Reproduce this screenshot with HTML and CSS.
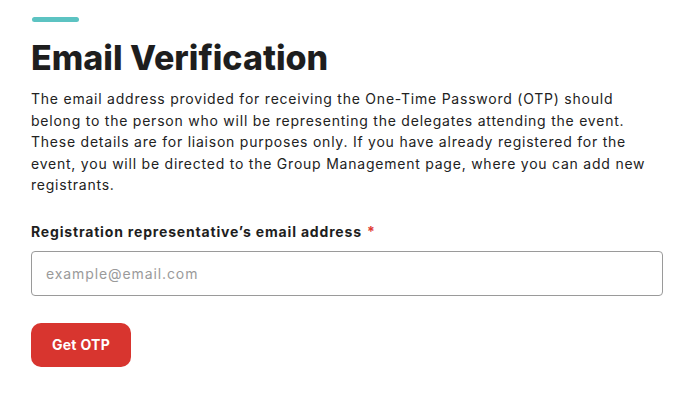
FILE: index.html
```html
<!DOCTYPE html>
<html lang="en">
<head>
<meta charset="utf-8">
<title>Email Verification</title>
<link rel="stylesheet" href="styles.css">
</head>
<body>
<main class="page">
  <div class="accent"></div>
  <h1 class="title">Email Verification</h1>
  <p class="intro">The email address provided for receiving the One-Time Password (OTP) should belong to the person who will be representing the delegates attending the event. These details are for liaison purposes only. If you have already registered for the event, you will be directed to the Group Management page, where you can add new registrants.</p>
  <form class="form">
    <label class="label" for="email">Registration representative’s email address <span class="req">*</span></label>
    <input class="input" id="email" type="email" placeholder="example@email.com">
    <button class="btn" type="button">Get OTP</button>
  </form>
</main>
</body>
</html>
```
FILE: styles.css
```css
* { box-sizing: border-box; }
html, body { margin: 0; background: #ffffff; }
body { font-family: "Inter", "Liberation Sans", sans-serif; color: #1e1e1e; }
.page { padding: 17px 35px 0 31px; display: flex; flex-direction: column; align-items: flex-start; }
.accent { width: 47px; height: 5px; border-radius: 3px; background: #5cc3c2; margin-left: 1px; }
.title { margin: 16px 0 0 0; font-size: 34px; font-weight: 800; line-height: 40px; letter-spacing: 0; }
.intro { margin: 10px 0 0 0; font-size: 14px; letter-spacing: 0.77px; line-height: 21.5px; max-width: 630px; color: #222; }
.form { display: flex; flex-direction: column; align-items: flex-start; width: 100%; margin-top: 26px; }
.label { font-size: 14px; font-weight: 700; letter-spacing: 0.82px; line-height: 20px; color: #1e1e1e; }
.req { color: #e03a33; margin-left: 1px; }
.input { margin-top: 9px; width: 632px; height: 45px; border: 1.5px solid #9a9a9a; border-radius: 4px; padding: 0 14px; font-family: inherit; font-size: 14px; letter-spacing: 0.9px; color: #333; background: #fff; outline: none; }
.input::placeholder { color: #9a9a9a; }
.btn { margin-top: 27px; width: 100px; height: 44px; border: none; border-radius: 10px; background: #d8352f; color: #fff; font-family: inherit; font-weight: 700; font-size: 14px; letter-spacing: 0.3px; }
```
